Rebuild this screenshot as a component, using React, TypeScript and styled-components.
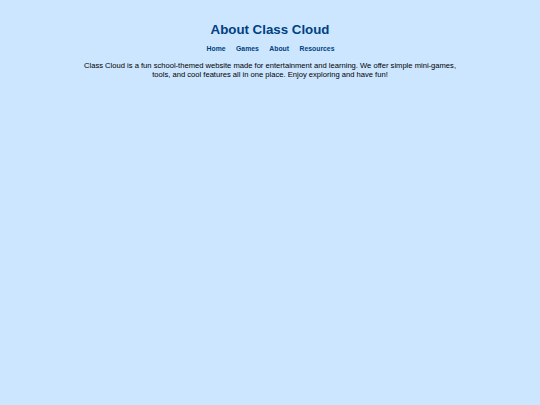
import React from "react";
import styled, { createGlobalStyle } from "styled-components";

const GlobalStyle = createGlobalStyle`
	html, body {
		margin: 0;
		padding: 0;
		background: #cce6ff;
		font-family: "Liberation Sans", Arial, sans-serif;
		color: #000;
	}
`;

const Page = styled.div`
	min-height: 405px;
	padding-top: 22px;
	box-sizing: border-box;
	display: flex;
	flex-direction: column;
	align-items: center;
`;

const Title = styled.h1`
	margin: 0;
	font-size: 13.3px;
	font-weight: 700;
	color: #004080;
`;

const Nav = styled.nav`
	display: flex;
	gap: 10.5px;
	margin-top: 8px;
	padding-left: 1px;
`;

const NavLink = styled.a`
	font-size: 6.84px;
	font-weight: 700;
	color: #004080;
	text-decoration: none;
	cursor: pointer;
`;

const About = styled.p`
	max-width: 380px;
	margin: 9.2px 0 0;
	font-size: 7.6px;
	text-align: center;
`;

const links: string[] = ["Home", "Games", "About", "Resources"];

export const App = () => {
	return (
		<>
			<GlobalStyle />
			<Page>
				<Title>About Class Cloud</Title>
				<Nav>
					{links.map((link) => (
						<NavLink key={link} href="#">
							{link}
						</NavLink>
					))}
				</Nav>
				<About>
					Class Cloud is a fun school-themed website made for entertainment and learning. We offer
					simple mini-games, tools, and cool features all in one place. Enjoy exploring and have fun!
				</About>
			</Page>
		</>
	);
};

export default App;
